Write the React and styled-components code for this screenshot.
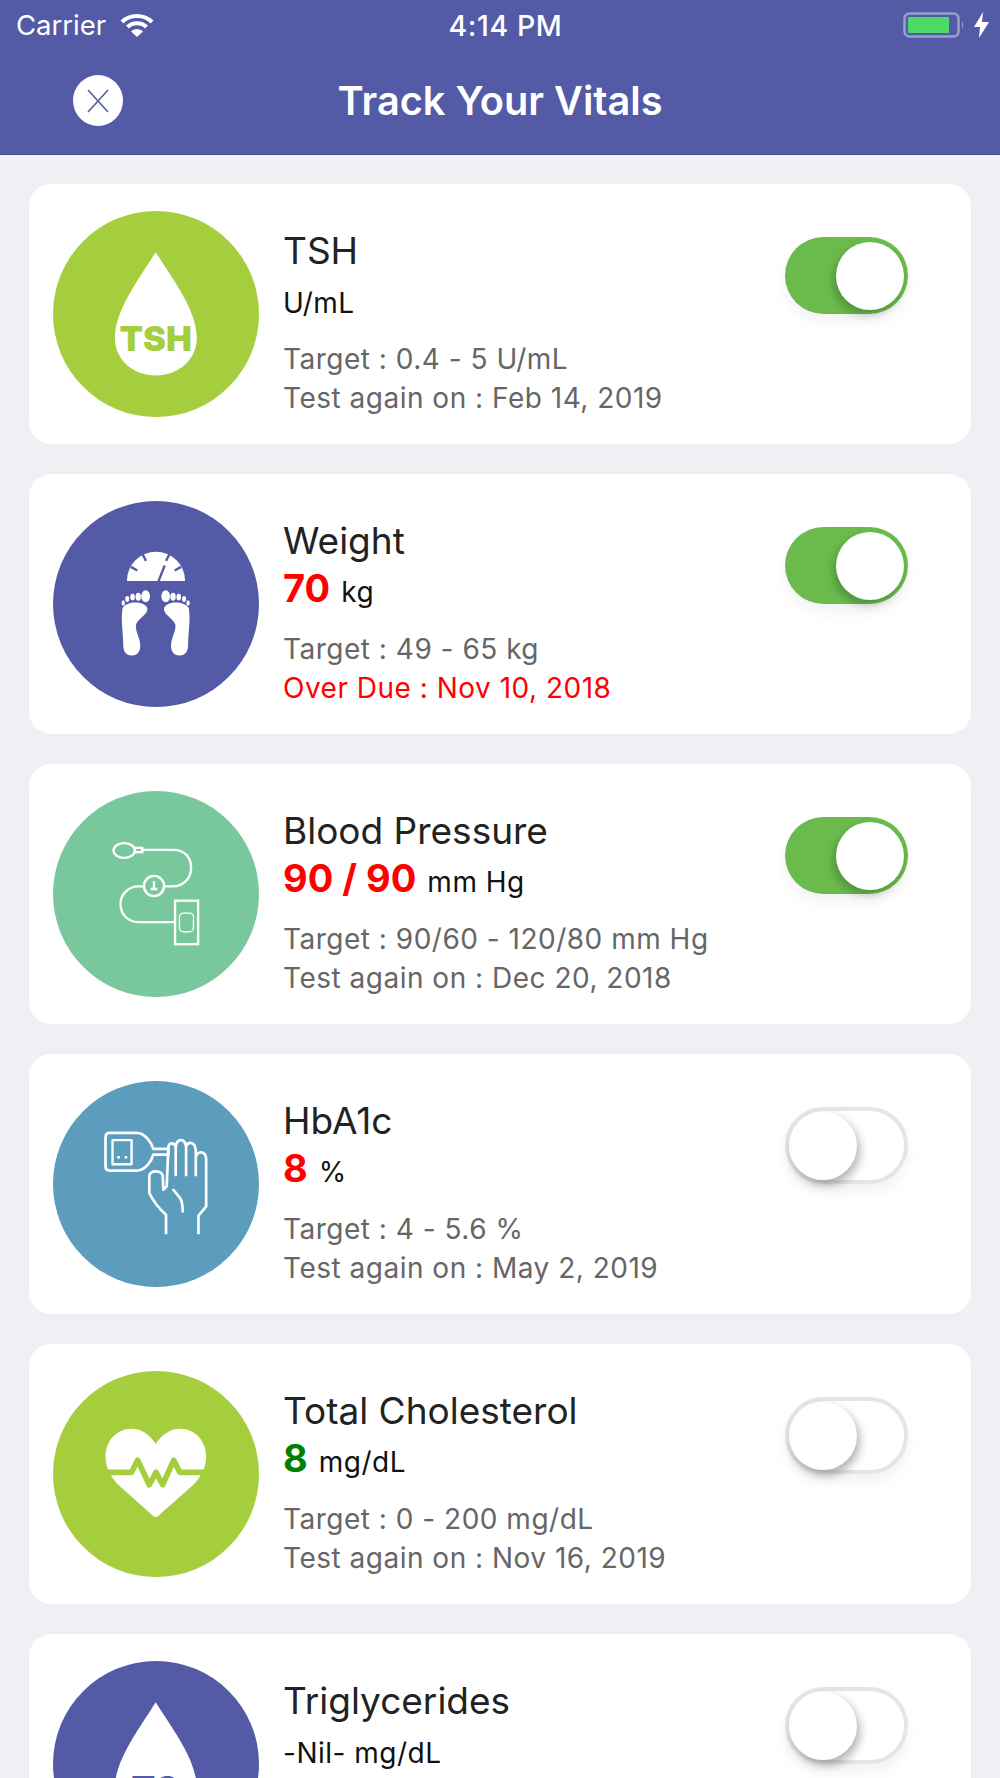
import React from "react";
import styled, { createGlobalStyle } from "styled-components";

const Global = createGlobalStyle`
  html, body { margin: 0; padding: 0; background: #efeff4; }
  body { font-family: Inter, "Noto Sans", sans-serif; }
  #root { height: 1778px; overflow: hidden; }
`;

const Page = styled.div`display:flex;flex-direction:column;width:1000px;height:1778px;overflow:hidden;background:#efeff4;`;
const Header = styled.header`flex:none;height:153.5px;background:#535aa6;border-bottom:1.5px solid #4a5090;color:#fff;display:flex;flex-direction:column;`;
const StatusBar = styled.div`height:50px;display:grid;grid-template-columns:1fr auto 1fr;align-items:center;padding:0 11px 0 16px;font-size:27.5px;`;
const StatusLeft = styled.div`display:flex;align-items:center;gap:14px;`;
const StatusRight = styled.div`display:flex;align-items:center;justify-content:flex-end;gap:9px;`;
const Time = styled.div`font-size:28.5px;font-weight:500;letter-spacing:.6px;margin-left:6px;`;
const NavBar = styled.div`flex:1;display:flex;align-items:center;padding:0 0 2px 73px;position:relative;`;
const CloseButton = styled.div`width:50px;height:51px;border-radius:50%;background:#fff;display:flex;align-items:center;justify-content:center;`;
const Title = styled.h1`position:absolute;left:0;right:0;top:28px;margin:0;text-align:center;font-size:39.7px;line-height:46px;font-weight:600;`;
const List = styled.main`display:flex;flex-direction:column;gap:30px;padding:29px 29px 0;`;
const Card = styled.section`flex:none;height:260px;box-sizing:border-box;background:#fff;border-radius:22px;padding:27.5px 63px 0 24px;display:flex;align-items:flex-start;`;
const Circle = styled.div`flex:none;width:206px;height:206px;border-radius:50%;background:${p=>p.$color};`;
const Info = styled.div`flex:1;margin-left:24px;padding-top:18px;`;
const Name = styled.div`font-size:37px;line-height:44px;color:#222;`;
const ValueRow = styled.div`height:56px;box-sizing:border-box;padding-top:${p=>p.$plain?"5px":"0"};line-height:50px;font-size:28px;letter-spacing:.5px;color:#111;white-space:nowrap;`;
const Value = styled.span`font-size:38px;font-weight:700;letter-spacing:0;color:${p=>p.$color};margin-right:11px;`;
const Detail = styled.div`margin-top:11px;font-size:28px;line-height:39px;color:#666;letter-spacing:.5px;`;
const Line = styled.div`color:${p=>p.$color||"inherit"};white-space:nowrap;`;
const Track = styled.div`flex:none;width:123px;height:77px;margin-top:26px;box-sizing:border-box;border-radius:39px;position:relative;background:${p=>p.$on?"#6abb4c":"#fff"};border:${p=>p.$on?"none":"4px solid #e5e5e5"};box-shadow:0 8px 14px rgba(0,0,0,.05);`;
const Thumb = styled.div`position:absolute;width:68px;height:68px;border-radius:50%;background:#fff;${p=>p.$on?"top:5px;left:51px;box-shadow:-3px 5px 9px rgba(0,0,0,.22);":"top:1px;left:0;box-shadow:3px 5px 10px rgba(0,0,0,.3);"}`;

const Art = ({children}) => <svg width="206" height="206" viewBox="70 65 616 616" fill="none">{children}</svg>;

const Drop = ({label, color}) => (
  <Art>
    <path d="M377 188C330 265 255 360 255 445C255 510 310 557 377 557C445 557 500 510 500 445C500 360 425 265 377 188Z" fill="#fff"/>
    <text x="377" y="485" textAnchor="middle" fontFamily="Inter" fontWeight="900" fontSize="103" fill={color}>{label}</text>
  </Art>
);

const Foot = () => (
  <g fill="#fff">
    <path d="M278 385C290 365 340 362 352 385C355 405 325 415 318 435C315 455 332 475 331 500C330 520 318 527 305 527C288 527 280 515 280 495C280 460 272 420 278 385Z"/>
    <ellipse cx="347" cy="350" rx="13" ry="18"/><ellipse cx="325" cy="351" rx="8" ry="12"/>
    <ellipse cx="308" cy="352" rx="7" ry="10"/><ellipse cx="292" cy="358" rx="6" ry="9"/><ellipse cx="280" cy="370" rx="5" ry="8"/>
  </g>
);
const WeightArt = () => (
  <Art>
    <path d="M291 304A87 87 0 0 1 465 304Z" fill="#fff"/>
    <path d="M303 262L322 273M338 224L348 244M418 224L408 244M453 262L434 273M385 306L404 258" stroke="#535aa6" strokeWidth="7"/>
    <Foot/>
    <g transform="translate(754 0) scale(-1 1)"><Foot/></g>
  </Art>
);
const PressureArt = () => (
  <Art>
    <g stroke="#fff" strokeWidth="7">
      <ellipse cx="283" cy="243" rx="32" ry="22"/><rect x="315" y="235" width="22" height="13"/>
      <path d="M338 241H430C465 241 483 265 483 295C483 325 460 350 430 350H402"/>
      <circle cx="372" cy="349" r="30"/><path d="M372 335V355M362 358H382"/>
      <path d="M342 350H325C295 350 272 375 272 402C272 435 295 457 325 457H434"/>
      <rect x="435" y="393" width="69" height="130"/><rect x="448" y="430" width="42" height="56" rx="12" strokeWidth="4"/>
    </g>
  </Art>
);
const SugarArt = () => (
  <Art>
    <g stroke="#fff" strokeWidth="8" strokeLinejoin="round">
      <path d="M240 220H320C345 220 365 250 370 268H415V285H370C365 305 345 333 320 333H240Q227 333 227 320V233Q227 220 240 220Z"/>
      <rect x="248" y="242" width="57" height="72" strokeWidth="7"/>
      <path d="M408 523V465C385 445 370 425 358 400V350C358 340 367 335 378 335C390 335 398 342 398 350L400 390L410 380L415 262C418 248 432 248 437 262"/>
      <path d="M437 350V262C440 235 465 235 468 262V350M468 262C472 245 493 245 497 270V350M497 295C500 272 528 272 528 300V440L505 468V523"/>
      <path d="M428 388L450 415C458 428 458 440 458 458"/>
    </g>
    <path d="M262 289h8v8h-8zM284 289h8v8h-8z" fill="#fff"/>
  </Art>
);
const HeartArt = () => (
  <Art>
    <path d="M377 283C400 250 425 238 450 238C495 238 528 275 528 320C528 355 510 385 490 405L385 498Q377 505 369 498L265 405C245 385 227 355 227 320C227 275 260 238 305 238C330 238 355 250 377 283Z" fill="#fff"/>
    <path d="M222 368H305L323 332L358 405L378 368L398 405L431 332L449 368H532" stroke="#a5ce3e" strokeWidth="17" strokeLinejoin="round"/>
  </Art>
);

const Wifi = () => (
  <svg width="34" height="24" viewBox="0 0 34 24" fill="none">
    <path d="M2 9C10 1 24 1 32 9" stroke="#fff" strokeWidth="4"/>
    <path d="M7.5 14C12.5 9 21.5 9 26.5 14" stroke="#fff" strokeWidth="4"/>
    <path d="M11 18.5C14 15 20 15 23 18.5L17 24Z" fill="#fff"/>
  </svg>
);
const Battery = () => (
  <svg width="62" height="26" viewBox="0 0 62 26">
    <rect x="1.5" y="1.5" width="54" height="23" rx="5" fill="none" stroke="#9a9ecb" strokeWidth="2.5"/>
    <rect x="5" y="5" width="41" height="16" rx="1" fill="#4cd964"/>
    <path d="M59 9Q61.5 13 59 17Z" fill="#9a9ecb"/>
  </svg>
);
const Bolt = () => (
  <svg width="15" height="26" viewBox="0 0 15 26"><path d="M9 0L0 15H6L5 26L15 10H8Z" fill="#fff"/></svg>
);
const CloseIcon = () => (
  <svg width="24" height="26" viewBox="0 0 24 26"><path d="M2 2L22 24M22 2L2 24" stroke="#535aa6" strokeWidth="1.6"/></svg>
);

const LIME="#a5ce3e", INDIGO="#535aa6", RED="#ff0000", GREEN="#008000";
const vitals = [
  {name:"TSH",unit:"U/mL",bg:LIME,art:<Drop label="TSH" color={LIME}/>,target:"Target : 0.4 - 5 U/mL",next:"Test again on : Feb 14, 2019",on:true},
  {name:"Weight",value:"70",vc:RED,unit:"kg",bg:INDIGO,art:<WeightArt/>,target:"Target : 49 - 65 kg",next:"Over Due : Nov 10, 2018",nc:RED,on:true},
  {name:"Blood Pressure",value:"90 / 90",vc:RED,unit:"mm Hg",bg:"#79c79c",art:<PressureArt/>,target:"Target : 90/60 - 120/80 mm Hg",next:"Test again on : Dec 20, 2018",on:true},
  {name:"HbA1c",value:"8",vc:RED,unit:"%",bg:"#5c9cbd",art:<SugarArt/>,target:"Target : 4 - 5.6 %",next:"Test again on : May 2, 2019"},
  {name:"Total Cholesterol",value:"8",vc:GREEN,unit:"mg/dL",bg:LIME,art:<HeartArt/>,target:"Target : 0 - 200 mg/dL",next:"Test again on : Nov 16, 2019"},
  {name:"Triglycerides",unit:"-Nil- mg/dL",bg:INDIGO,art:<Drop label="TG" color={INDIGO}/>},
];

export default function App(){
  return (
    <Page>
      <Global/>
      <Header>
        <StatusBar>
          <StatusLeft>Carrier<Wifi/></StatusLeft>
          <Time>4:14 PM</Time>
          <StatusRight><Battery/><Bolt/></StatusRight>
        </StatusBar>
        <NavBar>
          <CloseButton><CloseIcon/></CloseButton>
          <Title>Track Your Vitals</Title>
        </NavBar>
      </Header>
      <List>
        {vitals.map(v=>(
          <Card key={v.name}>
            <Circle $color={v.bg}>{v.art}</Circle>
            <Info>
              <Name>{v.name}</Name>
              <ValueRow $plain={!v.value}>{v.value&&<Value $color={v.vc}>{v.value}</Value>}{v.unit}</ValueRow>
              {v.target&&<Detail><Line>{v.target}</Line><Line $color={v.nc}>{v.next}</Line></Detail>}
            </Info>
            <Track $on={v.on}><Thumb $on={v.on}/></Track>
          </Card>
        ))}
      </List>
    </Page>
  );
}
